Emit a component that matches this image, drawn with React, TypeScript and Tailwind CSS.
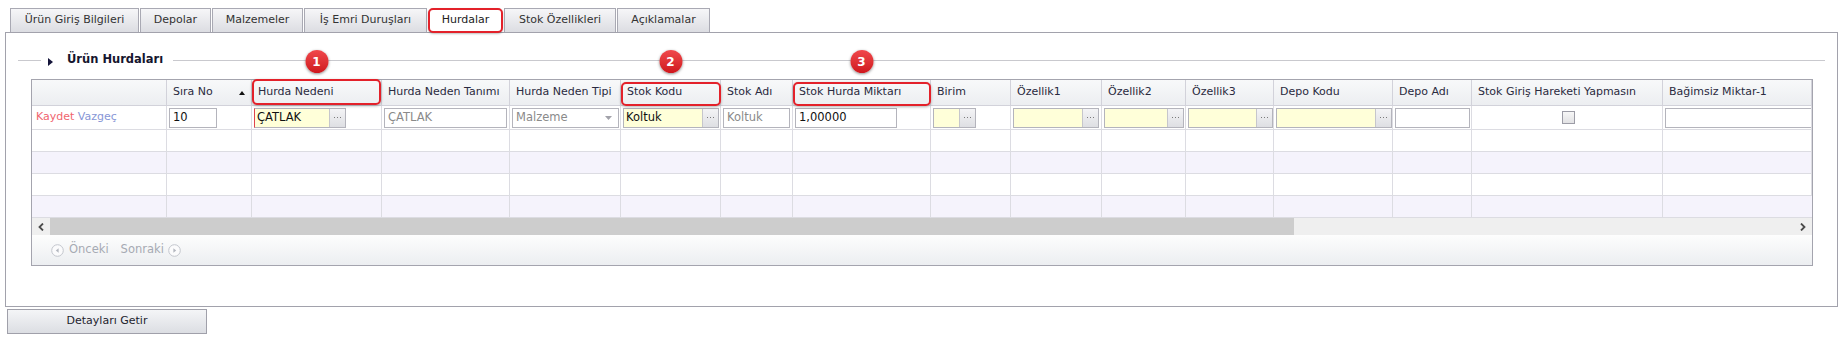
import React from 'react';

const tabs = [
  { label: 'Ürün Giriş Bilgileri', w: 'w-[129px]' },
  { label: 'Depolar', w: 'w-[71px]' },
  { label: 'Malzemeler', w: 'w-[91px]' },
  { label: 'İş Emri Duruşları', w: 'w-[123px]' },
  { label: 'Hurdalar', w: 'w-[75px]', active: true },
  { label: 'Stok Özellikleri', w: 'w-[112px]' },
  { label: 'Açıklamalar', w: 'w-[93px]' },
];

const gridCols =
  'grid-cols-[135px_85px_130px_128px_111px_100px_72px_138px_80px_91px_84px_88px_119px_79px_191px_149px]';

type Mark = { n: number; box: string };

const headers: { label: string; mark?: Mark; sort?: boolean }[] = [
  { label: '' },
  { label: 'Sıra No', sort: true },
  { label: 'Hurda Nedeni', mark: { n: 1, box: '-top-px bottom-0 left-0 right-0' } },
  { label: 'Hurda Neden Tanımı' },
  { label: 'Hurda Neden Tipi' },
  { label: 'Stok Kodu', mark: { n: 2, box: 'top-[2px] -bottom-px left-0 -right-px' } },
  { label: 'Stok Adı' },
  { label: 'Stok Hurda Miktarı', mark: { n: 3, box: 'top-[2px] -bottom-px left-0 -right-px' } },
  { label: 'Birim' },
  { label: 'Özellik1' },
  { label: 'Özellik2' },
  { label: 'Özellik3' },
  { label: 'Depo Kodu' },
  { label: 'Depo Adı' },
  { label: 'Stok Giriş Hareketi Yapmasın' },
  { label: 'Bağimsiz Miktar-1' },
];

// the little "..." lookup button
const Dots = () => (
  <div className="w-[16px] h-full flex items-center justify-center gap-[2px] border-l border-[#c6c6cc] bg-gradient-to-b from-[#f4f4f6] to-[#dedfe3]">
    <span className="w-px h-px bg-[#7a7a7a]" />
    <span className="w-px h-px bg-[#7a7a7a]" />
    <span className="w-px h-px bg-[#7a7a7a]" />
  </div>
);

const Lookup = ({ w, value, required }: { w: string; value?: string; required?: boolean }) => (
  <div className={`${w} h-[20px] flex border border-[#b4b4bc] ${required ? 'border-l-[#e0444c]' : ''}`}>
    <div className="flex-1 bg-[#ffffd9] pl-[2px] flex items-center text-[11.5px] text-[#111] overflow-hidden">
      {value}
    </div>
    <Dots />
  </div>
);

const TextBox = ({ w, value, muted }: { w: string; value?: string; muted?: boolean }) => (
  <div
    className={`${w} h-[20px] border border-[#b4b4bc] bg-white pl-[3px] flex items-center text-[11.5px] ${muted ? 'text-[#8a8a8a]' : 'text-[#111]'}`}
  >
    {value}
  </div>
);

const inputCells: React.ReactNode[] = [
  <div className="pl-[3px] text-[11px]">
    <span className="text-[#f0646e]">Kaydet</span> <span className="text-[#8796d6]">Vazgeç</span>
  </div>,
  <TextBox w="w-[48px]" value="10" />,
  <Lookup w="w-[92px]" value="ÇATLAK" required />,
  <TextBox w="w-[123px]" value="ÇATLAK" muted />,
  <div className="w-[107px] h-[20px] border border-[#b4b4bc] bg-white pl-[3px] pr-[6px] flex items-center justify-between text-[11.5px] text-[#8a8a8a]">
    Malzeme
    <svg width="7" height="4" viewBox="0 0 7 4">
      <path d="M0 0h7L3.5 4z" fill="#a2a2aa" />
    </svg>
  </div>,
  <Lookup w="w-[96px]" value="Koltuk" />,
  <TextBox w="w-[67px]" value="Koltuk" muted />,
  <TextBox w="w-[102px]" value="1,00000" />,
  <Lookup w="w-[43px]" />,
  <Lookup w="w-[86px]" />,
  <Lookup w="w-[80px]" />,
  <Lookup w="w-[85px]" />,
  <Lookup w="w-[116px]" />,
  <TextBox w="w-[75px]" />,
  <div className="flex justify-center">
    <div className="w-[13px] h-[13px] border border-[#9c9ca6] bg-gradient-to-b from-[#f7f7f7] to-[#e2e2e4]" />
  </div>,
  <div className="h-[20px] border border-r-0 border-[#b4b4bc] bg-white" />,
];

const Badge = ({ n }: { n: number }) => (
  <div className="absolute -top-[30px] left-1/2 -translate-x-1/2 w-[23px] h-[23px] rounded-full bg-gradient-to-b from-[#f0474b] to-[#cf151c] shadow-[0_1px_3px_rgba(0,0,0,0.45)] flex items-center justify-center text-white font-bold text-[12px] z-10">
    {n}
  </div>
);

const PagerIcon = ({ dir }: { dir: 'l' | 'r' }) => (
  <svg width="13" height="13" viewBox="0 0 13 13">
    <circle cx="6.5" cy="6.5" r="5.8" fill="#fbfbfc" stroke="#c3c6cd" />
    <path d={dir === 'l' ? 'M7.6 4.3v4.4L4.8 6.5z' : 'M5.4 4.3v4.4l2.8-2.2z'} fill="#b2b6be" />
  </svg>
);

export default function App() {
  return (
    <div className="w-[1843px] h-[341px] bg-white font-['DejaVu_Sans',sans-serif] text-[11px] text-[#222]">
      {/* tabs */}
      <div className="pt-[8px] pl-[10px] flex gap-[1px] items-end h-[32px]">
        {tabs.map(t =>
          t.active ? (
            <div
              key={t.label}
              className={`${t.w} h-[25px] -mb-px relative z-10 bg-white border-2 border-[#e3212a] rounded-[5px] shadow-[0_1px_2px_rgba(0,0,0,0.25)] flex items-center justify-center text-[#222]`}
            >
              {t.label}
            </div>
          ) : (
            <div
              key={t.label}
              className={`${t.w} h-[24px] border border-b-0 border-[#a9a9b3] bg-gradient-to-b from-[#f6f6f8] to-[#dcdde2] flex items-center justify-center text-[#333]`}
            >
              {t.label}
            </div>
          )
        )}
      </div>

      {/* panel */}
      <div className="mx-[5px] h-[275px] border border-[#a2a2ac] bg-white">
        <div className="mt-[17px] h-[20px] flex items-center">
          <div className="ml-[12px] w-[23px] h-px bg-[#c9c9ce]" />
          <svg className="ml-[7px] mt-[3px]" width="5" height="8" viewBox="0 0 5 8">
            <path d="M0 0l5 4-5 4z" fill="#14143a" />
          </svg>
          <div className="ml-[14px] font-bold text-[11.5px] text-[#15152e]">Ürün Hurdaları</div>
          <div className="ml-[10px] mr-[12px] flex-1 h-px bg-[#c9c9ce]" />
        </div>

        {/* grid */}
        <div className="mt-[9px] ml-[25px] w-[1782px] border border-[#a4a4ae]">
          <div className={`grid ${gridCols}`}>
            {headers.map((h, i) => (
              <div
                key={'h' + i}
                className="relative h-[26px] border-r border-b border-[#d2d2da] bg-gradient-to-b from-[#f8f9fa] to-[#eceef1] pl-[6px] flex items-center text-[#2a2a40] whitespace-nowrap last:border-r-0"
              >
                {h.label}
                {h.sort && (
                  <svg className="absolute right-[6px] top-[11px]" width="6" height="4" viewBox="0 0 6 4">
                    <path d="M3 0l3 4H0z" fill="#111" />
                  </svg>
                )}
                {h.mark && (
                  <>
                    <div
                      className={`absolute ${h.mark.box} border-2 border-[#e3212a] rounded-[5px] shadow-[0_1px_3px_rgba(0,0,0,0.3)] z-10`}
                    />
                    <Badge n={h.mark.n} />
                  </>
                )}
              </div>
            ))}

            {inputCells.map((c, i) => (
              <div
                key={'i' + i}
                className={`h-[24px] border-r border-b border-[#dcdce2] bg-white flex items-center ${i === 0 ? '' : 'pl-[1px]'} last:border-r-0`}
              >
                <div className="w-full pl-px">{c}</div>
              </div>
            ))}

            {[0, 1, 2, 3].map(r =>
              headers.map((_, i) => (
                <div
                  key={r + '-' + i}
                  className={`h-[22px] border-r border-b border-[#dcdce2] last:border-r-0 ${r % 2 === 1 ? 'bg-[#f5f3fc]' : 'bg-white'}`}
                />
              ))
            )}
          </div>

          {/* horizontal scrollbar */}
          <div className="h-[17px] flex bg-[#efefef]">
            <div className="w-[18px] flex items-center justify-center">
              <svg width="6" height="8" viewBox="0 0 6 8">
                <path d="M5 0.5L1.5 4 5 7.5" stroke="#4a4a4a" strokeWidth="1.8" fill="none" />
              </svg>
            </div>
            <div className="w-[1244px] bg-[#cdcdcd]" />
            <div className="flex-1" />
            <div className="w-[18px] flex items-center justify-center">
              <svg width="6" height="8" viewBox="0 0 6 8">
                <path d="M1 0.5L4.5 4 1 7.5" stroke="#4a4a4a" strokeWidth="1.8" fill="none" />
              </svg>
            </div>
          </div>

          {/* pager */}
          <div className="h-[30px] bg-gradient-to-b from-[#fdfdfd] to-[#eceef1] flex items-center pl-[19px] text-[11.5px] text-[#a6aab3]">
            <PagerIcon dir="l" />
            <span className="ml-[5px]">Önceki</span>
            <span className="ml-[12px]">Sonraki</span>
            <span className="ml-[4px] flex">
              <PagerIcon dir="r" />
            </span>
          </div>
        </div>
      </div>

      <div className="mt-[2px] ml-[7px] w-[200px] h-[25px] border border-[#a0a0aa] bg-gradient-to-b from-[#f4f5f7] to-[#dcdee3] flex items-center justify-center text-[#1e1e2e]">
        Detayları Getir
      </div>
    </div>
  );
}
